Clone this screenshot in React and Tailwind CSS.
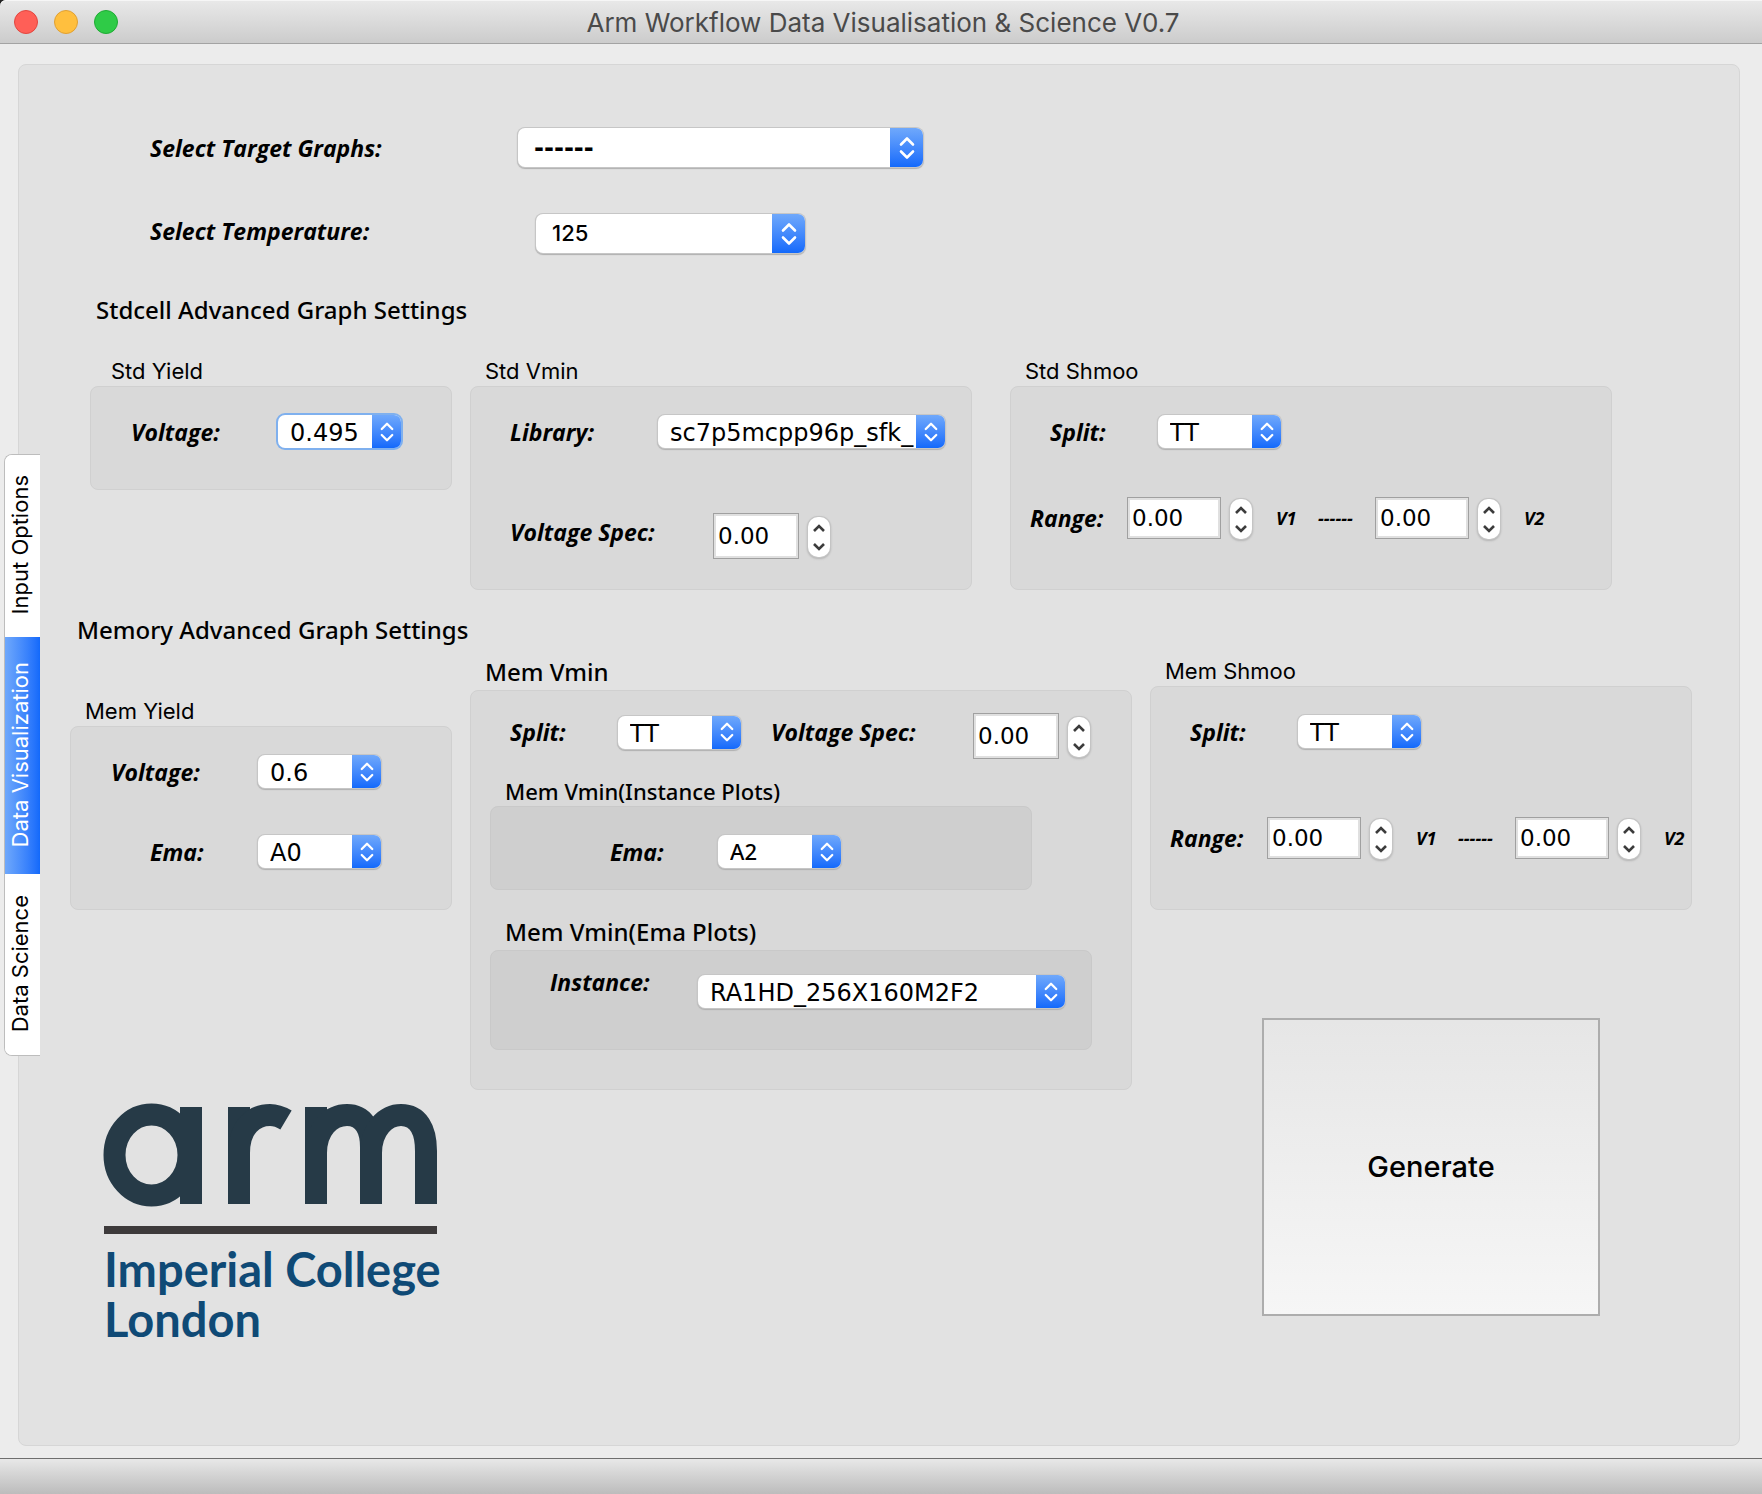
import React, { useId } from "react";

const lucida = "font-['DejaVu_Sans',sans-serif] text-[24px]";

function Label({ htmlFor, className = "", children }) {
  return (
    <label
      htmlFor={htmlFor}
      className={`shrink-0 whitespace-nowrap font-['Open_Sans',sans-serif] text-[23px] leading-8 font-bold italic ${className}`}
    >
      {children}
    </label>
  );
}

function Chevrons({ className }) {
  return (
    <svg
      viewBox="0 0 16 24"
      fill="none"
      stroke="currentColor"
      strokeWidth="2.6"
      strokeLinecap="round"
      strokeLinejoin="round"
      className={className}
      aria-hidden="true"
    >
      <path d="M2 8.5 8 2.5l6 6M2 15.5l6 6 6-6" />
    </svg>
  );
}

function Combo({ id, value, large = false, focused = false, width, font = lucida }) {
  return (
    <span
      className={`relative flex shrink-0 overflow-hidden rounded-[7px] bg-white ${width} ${large ? "h-[39px]" : "h-[33px]"} ${
        focused
          ? "shadow-[0_0_0_2px_#7fb0ee]"
          : "shadow-[0_0_0_1px_#c6c6c6,0_1px_1px_1px_#b0b0b0]"
      }`}
    >
      <select
        id={id}
        defaultValue={value}
        className={`h-full min-w-0 flex-1 appearance-none overflow-hidden bg-transparent outline-none ${
          large ? "pl-4" : "pl-3"
        } ${font}`}
      >
        <option>{value}</option>
      </select>
      <span
        className={`pointer-events-none flex shrink-0 items-center justify-center bg-linear-to-b from-[#6fa8fb] to-[#1269fb] text-white ${
          large ? "w-[33px]" : "w-[29px]"
        }`}
      >
        <Chevrons className={large ? "h-7 w-4" : "h-[22px] w-[14px]"} />
      </span>
    </span>
  );
}

function Spin({ id, label, size }) {
  return (
    <span className="flex shrink-0 items-center gap-[9px]">
      <input
        id={id}
        aria-label={label}
        defaultValue="0.00"
        className={`border border-[#a0a0a0] bg-white pl-1 font-['DejaVu_Sans',sans-serif] text-[23px] shadow-[inset_0_0_0_2px_#e0e0e0] outline-none ${size}`}
      />
      <span className="mt-[2px] flex h-10 w-[22px] flex-col overflow-hidden rounded-[10px] bg-white text-[#3c3c3c] shadow-[0_0_0_1px_#c4c4c4,0_1px_2px_1px_#b4b4b4]">
        <button type="button" aria-label="Increase" className="flex flex-1 items-end justify-center pb-[5px]">
          <svg viewBox="0 0 12 8" className="h-2 w-3" fill="none" stroke="currentColor" strokeWidth="2.6" aria-hidden="true">
            <path d="M1 7l5-5 5 5" />
          </svg>
        </button>
        <button type="button" aria-label="Decrease" className="flex flex-1 items-start justify-center pt-[6px]">
          <svg viewBox="0 0 12 8" className="h-2 w-3" fill="none" stroke="currentColor" strokeWidth="2.6" aria-hidden="true">
            <path d="M1 1l5 5 5-5" />
          </svg>
        </button>
      </span>
    </span>
  );
}

const titleStyles = {
  plain: "font-['Inter',sans-serif] text-[22px] leading-[30px]",
  medium: "font-['Noto_Sans',sans-serif] text-[22px] leading-[30px] font-medium",
  strong: "font-['Noto_Sans',sans-serif] text-[24px] leading-[36px] font-medium",
};

function Group({ title, tone = "plain", inset = "pl-[15px]", className = "", box = "", inner = false, children }) {
  return (
    <section className={className}>
      <h3 className={`whitespace-nowrap ${inset} ${titleStyles[tone]}`}>{title}</h3>
      <div
        className={`rounded-lg border ${
          inner ? "border-[#c9c9c9] bg-[#cfcfcf]" : "border-[#d0d0d0] bg-[#d9d9d9]"
        } ${box}`}
      >
        {children}
      </div>
    </section>
  );
}

function RangeRow({ className }) {
  const id = useId();
  const small = "font-['Open_Sans',sans-serif] text-[18px] font-bold italic";
  return (
    <div className={`flex items-center pl-[19px] ${className}`}>
      <Label htmlFor={id} className="w-[97px]">Range:</Label>
      <Spin id={id} size="h-[42px] w-[94px]" />
      <span className={`ml-6 w-[42px] ${small}`}>V1</span>
      <span className={`w-[57px] ${small}`}>------</span>
      <Spin label="Range end" size="h-[42px] w-[94px]" />
      <span className={`ml-6 ${small}`}>V2</span>
    </div>
  );
}

function SplitRow() {
  const id = useId();
  return (
    <div className="flex items-center pt-7 pl-[39px]">
      <Label htmlFor={id} className="w-[108px]">Split:</Label>
      <Combo id={id} value="TT" width="w-[123px]" />
    </div>
  );
}

const tabs = [
  { name: "Input Options", height: "h-[182px]" },
  { name: "Data Visualization", height: "h-[237px]", active: true },
  { name: "Data Science", height: "h-[181px]" },
];

function Logo() {
  return (
    <div className="w-[346px]">
      <svg viewBox="0 0 334 133" className="block h-[133px] w-[334px] overflow-visible" role="img" aria-label="arm">
        <g fill="none" stroke="#263a47" strokeWidth="22">
          <ellipse cx="47.5" cy="52" rx="37" ry="40.5" />
          <path d="M87 4v97M135 4v97" />
          <path d="M135 50C135 24 150 12 166 12C172 12 177 14 182 17" />
          <path d="M212 4v97" />
          <path d="M212 50C212 26 227 12 243 12C259 12 267 25 267 44V101" />
          <path d="M267 50C267 26 282 12 297 12C314 12 322 26 322 48V101" />
        </g>
        <rect x="0" y="123" width="333" height="8" fill="#3d3a3b" />
      </svg>
      <p className="mt-2 font-['Lato',sans-serif] text-[47px] leading-[50px] font-bold text-[#0f4a76]">
        Imperial College London
      </p>
    </div>
  );
}

export default function App() {
  return (
    <div className="flex min-h-screen flex-col bg-[#ececec] text-black">
      <div className="bg-[#222]">
        <header className="flex h-11 items-center rounded-tl-md border-b border-[#a3a3a3] bg-linear-to-b from-[#e9e9e9] to-[#cccccc] px-[14px] shadow-[inset_0_1px_0_#f6f6f6]">
          <div className="flex flex-1 gap-4">
            <button type="button" aria-label="Close" className="size-6 rounded-full border border-[#e2463f] bg-[#ff5f57]" />
            <button type="button" aria-label="Minimise" className="size-6 rounded-full border border-[#e0a033] bg-[#ffbf3e]" />
            <button type="button" aria-label="Zoom" className="size-6 rounded-full border border-[#1fab34] bg-[#2fcb47]" />
          </div>
          <h1 className="pt-[2px] pl-1 font-['Inter',sans-serif] text-[26px] text-[#4a4a4a]">
            Arm Workflow Data Visualisation &amp; Science V0.7
          </h1>
          <div className="flex-1" />
        </header>
      </div>

      <main className="flex flex-1 pt-5 pr-[22px] pb-3">
        <nav role="tablist" className="z-10 ml-1 flex w-9 shrink-0 flex-col self-center overflow-hidden rounded-l-lg border border-r-0 border-[#bdbdbd] bg-white">
          {tabs.map((t) => (
            <button
              key={t.name}
              type="button"
              role="tab"
              aria-selected={!!t.active}
              className={`flex items-center justify-start pb-[2px] ${t.height} ${
                t.active ? "bg-linear-to-r from-[#6fa8fb] to-[#1269fb] text-white" : "bg-white"
              }`}
            >
              <span className="m-auto ml-0 rotate-180 font-['Inter',sans-serif] text-[22px] leading-[30px] whitespace-nowrap [writing-mode:vertical-rl]">
                {t.name}
              </span>
            </button>
          ))}
        </nav>

        <div className="-ml-[22px] flex-1 rounded-lg border border-[#d6d6d6] bg-[#e2e2e2]">
          <div className="flex items-center pt-[63px] pl-[131px]">
            <Label htmlFor="graphs" className="w-[368px]">Select Target Graphs:</Label>
            <Combo id="graphs" value="------" large width="w-[405px]" font="font-['DejaVu_Sans',sans-serif] text-[24px] font-bold" />
          </div>
          <div className="mt-[47px] flex items-center pl-[131px]">
            <Label htmlFor="temp" className="w-[386px] pb-[6px]">Select Temperature:</Label>
            <Combo id="temp" value="125" large width="w-[269px]" font="font-['Inter',sans-serif] text-[22px] font-medium" />
          </div>

          <h2 className="mt-[39px] pl-[77px] font-['Noto_Sans',sans-serif] text-[24px] leading-[36px] font-medium">
            Stdcell Advanced Graph Settings
          </h2>
          <div className="mt-7 grid grid-cols-[362fr_502fr_622fr] items-start gap-x-[18px] pr-[127px] pl-[71px]">
            <Group title="Std Yield" inset="pl-[21px]" box="h-[104px]">
              <div className="flex items-center pt-7 pl-10">
                <Label htmlFor="sy-v" className="w-[147px]">Voltage:</Label>
                <Combo id="sy-v" value="0.495" focused width="w-[123px]" />
              </div>
            </Group>
            <Group title="Std Vmin" box="h-[204px]">
              <div className="flex items-center pt-7 pl-[39px]">
                <Label htmlFor="sv-l" className="w-[148px]">Library:</Label>
                <Combo id="sv-l" value="sc7p5mcpp96p_sfk_" width="w-[287px]" />
              </div>
              <div className="mt-[65px] flex items-center pl-[39px]">
                <Label htmlFor="sv-s" className="w-[203px] pb-2">Voltage Spec:</Label>
                <Spin id="sv-s" size="h-[46px] w-[86px]" />
              </div>
            </Group>
            <Group title="Std Shmoo" className="ml-5" box="h-[204px]">
              <SplitRow />
              <RangeRow className="mt-[49px]" />
            </Group>
          </div>

          <h2 className="mt-[22px] pl-[58px] font-['Noto_Sans',sans-serif] text-[24px] leading-[36px] font-medium">
            Memory Advanced Graph Settings
          </h2>
          <div className="mt-[6px] grid grid-cols-[382fr_662fr_542fr] items-start gap-x-[18px] pr-[47px] pl-[51px]">
            <div>
              <Group title="Mem Yield" className="mt-[42px]" box="h-[184px]">
                <div className="flex items-center pt-7 pl-10">
                  <Label htmlFor="my-v" className="w-[147px]">Voltage:</Label>
                  <Combo id="my-v" value="0.6" width="w-[123px]" />
                </div>
                <div className="mt-[47px] flex items-center pl-[79px]">
                  <Label htmlFor="my-e" className="w-[108px]">Ema:</Label>
                  <Combo id="my-e" value="A0" width="w-[123px]" />
                </div>
              </Group>
              <div className="mt-[193px] pl-[34px]">
                <Logo />
              </div>
            </div>

            <Group title="Mem Vmin" tone="strong" box="h-[400px]">
              <div className="flex items-center pt-[22px] pl-[39px]">
                <Label htmlFor="mv-s" className="w-[108px] pb-2">Split:</Label>
                <span className="pb-2"><Combo id="mv-s" value="TT" width="w-[123px]" /></span>
                <Label htmlFor="mv-v" className="ml-[30px] w-[202px] pb-2">Voltage Spec:</Label>
                <Spin id="mv-v" size="h-[46px] w-[86px]" />
              </div>
              <Group title="Mem Vmin(Instance Plots)" tone="medium" inner className="mt-[17px] mr-[99px] ml-[19px]" box="h-[84px]">
                <div className="flex items-center pt-7 pl-[119px]">
                  <Label htmlFor="mv-e" className="w-[108px]">Ema:</Label>
                  <Combo id="mv-e" value="A2" width="w-[123px]" font="font-['Noto_Sans',sans-serif] text-[22px] font-medium" />
                </div>
              </Group>
              <Group title="Mem Vmin(Ema Plots)" tone="strong" inner className="mt-6 mr-[39px] ml-[19px]" box="h-[100px]">
                <div className="flex items-start pt-[15px] pl-[59px]">
                  <Label htmlFor="mv-i" className="w-[148px]">Instance:</Label>
                  <span className="pt-[9px]"><Combo id="mv-i" value="RA1HD_256X160M2F2" width="w-[367px]" /></span>
                </div>
              </Group>
            </Group>

            <div className="mt-[2px]">
              <Group title="Mem Shmoo" box="h-[224px]">
                <SplitRow />
                <RangeRow className="mt-[69px]" />
              </Group>
              <button
                type="button"
                className="mt-[108px] ml-[112px] h-[298px] w-[338px] border-2 border-[#adadad] bg-linear-to-b from-[#e6e6e6] to-[#f6f6f6] font-['Inter',sans-serif] text-[29px] font-medium"
              >
                Generate
              </button>
            </div>
          </div>
        </div>
      </main>

      <footer className="h-9 border-t border-[#6e6e6e] bg-linear-to-b from-[#e8e8e8] to-[#bcbcbc]" />
    </div>
  );
}
